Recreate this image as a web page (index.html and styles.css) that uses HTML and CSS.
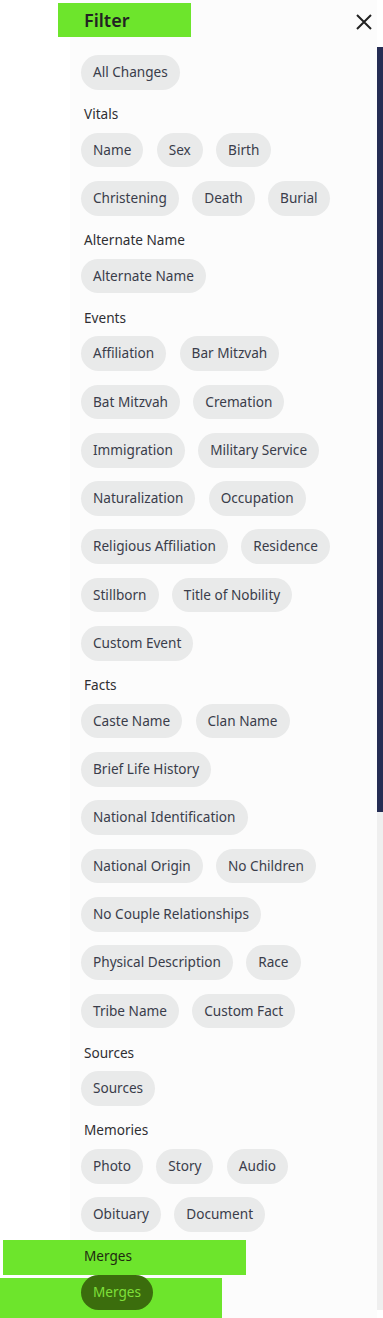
FILE: index.html
```html
<!DOCTYPE html>
<html>

<head>
    <link rel="stylesheet" href="styles.css">
    <title>Filter</title>
</head>

<body>
    <div class="drawer">
        <div class="panel">
            <div class="header">
                <h2 class="title">Filter</h2>
                <button class="close" aria-label="Close">
                    <svg width="16" height="16" viewBox="0 0 16 16">
                        <path d="M1 1 L15 15 M15 1 L1 15" stroke="#222" stroke-width="2" fill="none"/>
                    </svg>
                </button>
            </div>

            <div class="group first">
                <div class="chips">
                    <span class="chip">All Changes</span>
                </div>
            </div>

            <div class="group">
                <div class="label">Vitals</div>
                <div class="chips">
                    <span class="chip">Name</span>
                    <span class="chip">Sex</span>
                    <span class="chip">Birth</span>
                    <span class="chip">Christening</span>
                    <span class="chip">Death</span>
                    <span class="chip">Burial</span>
                </div>
            </div>

            <div class="group">
                <div class="label">Alternate Name</div>
                <div class="chips">
                    <span class="chip">Alternate Name</span>
                </div>
            </div>

            <div class="group">
                <div class="label">Events</div>
                <div class="chips">
                    <span class="chip">Affiliation</span>
                    <span class="chip">Bar Mitzvah</span>
                    <span class="chip">Bat Mitzvah</span>
                    <span class="chip">Cremation</span>
                    <span class="chip">Immigration</span>
                    <span class="chip">Military Service</span>
                    <span class="chip">Naturalization</span>
                    <span class="chip">Occupation</span>
                    <span class="chip">Religious Affiliation</span>
                    <span class="chip">Residence</span>
                    <span class="chip">Stillborn</span>
                    <span class="chip">Title of Nobility</span>
                    <span class="chip">Custom Event</span>
                </div>
            </div>

            <div class="group">
                <div class="label">Facts</div>
                <div class="chips">
                    <span class="chip">Caste Name</span>
                    <span class="chip">Clan Name</span>
                    <span class="chip">Brief Life History</span>
                    <span class="chip">National Identification</span>
                    <span class="chip">National Origin</span>
                    <span class="chip">No Children</span>
                    <span class="chip">No Couple Relationships</span>
                    <span class="chip">Physical Description</span>
                    <span class="chip">Race</span>
                    <span class="chip">Tribe Name</span>
                    <span class="chip">Custom Fact</span>
                </div>
            </div>

            <div class="group">
                <div class="label">Sources</div>
                <div class="chips">
                    <span class="chip">Sources</span>
                </div>
            </div>

            <div class="group">
                <div class="label">Memories</div>
                <div class="chips">
                    <span class="chip">Photo</span>
                    <span class="chip">Story</span>
                    <span class="chip">Audio</span>
                    <span class="chip">Obituary</span>
                    <span class="chip">Document</span>
                </div>
            </div>

            <div class="group merges">
                <div class="label marked">Merges</div>
                <div class="chips marked-row">
                    <span class="chip selected">Merges</span>
                </div>
            </div>
        </div>

        <div class="scrollbar">
            <div class="thumb"></div>
        </div>
    </div>
</body>

</html>
```

FILE: styles.css
```css
html, body {
    margin: 0;
    height: 1318px;
    overflow: hidden;
    background: #ffffff;
    font-family: "Noto Sans", "Open Sans", sans-serif;
}

.drawer {
    display: flex;
    margin-left: 70px;
    height: 1318px;
}

.panel {
    flex: 1;
    background: #fcfcfc;
    padding: 0 5px 0 11px;
}

.header {
    display: flex;
    justify-content: space-between;
    align-items: center;
    margin-top: 3px;
    height: 34px;
}

.title {
    margin: 0 0 0 -23px;
    padding-left: 26px;
    width: 107px;
    height: 34px;
    line-height: 34px;
    font-size: 18px;
    font-weight: 600;
    color: #222222;
    background: #6de52c;
}

.close {
    border: none;
    background: none;
    padding: 0;
    width: 16px;
    height: 16px;
    margin-top: 4px;
    margin-right: 0;
}

.group {
    margin-top: 14.33px;
}

.group.first {
    margin-top: 18px;
}

.label {
    font-size: 13.6px;
    line-height: 20px;
    padding-left: 3px;
    margin-bottom: 8.67px;
    color: #2f2f33;
}

.chips {
    display: flex;
    flex-wrap: wrap;
    gap: 13.67px 13.33px;
    margin-right: 10px;
}

.chip {
    display: inline-block;
    height: 34.67px;
    line-height: 34.67px;
    padding: 0 12px;
    border-radius: 18px;
    background: #e9eaea;
    color: #3a3d4a;
    font-size: 13.6px;
    white-space: nowrap;
}

.merges {
    margin-top: 8.33px;
}

.label.marked {
    margin: 0 0 0 -78px;
    padding: 6px 0 9px 81px;
    width: 162px;
    background: #6de52c;
    color: #1f2a10;
}

.chips.marked-row {
    margin: 3px 0 0 -81px;
    padding: 0 0 8px 81px;
    width: 141px;
    height: 32px;
    background: #6de52c;
}

.chip.selected {
    margin-top: -3px;
    background: #3b6d0d;
    color: #7fe03a;
}

.scrollbar {
    width: 6px;
    margin-top: 47px;
    height: 1263px;
    background: #efefef;
}

.thumb {
    height: 765px;
    background: #252d54;
}
```
